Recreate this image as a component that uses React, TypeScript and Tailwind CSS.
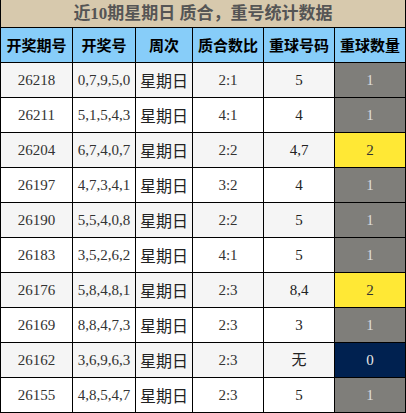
import React from "react";

type Row = { id: string; nums: string; week: string; ratio: string; rep: string; cnt: number };

const rows: Row[] = [
  { id: "26218", nums: "0,7,9,5,0", week: "星期日", ratio: "2:1", rep: "5", cnt: 1 },
  { id: "26211", nums: "5,1,5,4,3", week: "星期日", ratio: "4:1", rep: "4", cnt: 1 },
  { id: "26204", nums: "6,7,4,0,7", week: "星期日", ratio: "2:2", rep: "4,7", cnt: 2 },
  { id: "26197", nums: "4,7,3,4,1", week: "星期日", ratio: "3:2", rep: "4", cnt: 1 },
  { id: "26190", nums: "5,5,4,0,8", week: "星期日", ratio: "2:2", rep: "5", cnt: 1 },
  { id: "26183", nums: "3,5,2,6,2", week: "星期日", ratio: "4:1", rep: "5", cnt: 1 },
  { id: "26176", nums: "5,8,4,8,1", week: "星期日", ratio: "2:3", rep: "8,4", cnt: 2 },
  { id: "26169", nums: "8,8,4,7,3", week: "星期日", ratio: "2:3", rep: "3", cnt: 1 },
  { id: "26162", nums: "3,6,9,6,3", week: "星期日", ratio: "2:3", rep: "无", cnt: 0 },
  { id: "26155", nums: "4,8,5,4,7", week: "星期日", ratio: "2:3", rep: "5", cnt: 1 },
];

const headers = ["开奖期号", "开奖号", "周次", "质合数比", "重球号码", "重球数量"];

const font = { fontFamily: '"Liberation Serif", "Noto Sans CJK SC", serif' };

function cntCls(c: number) {
  if (c === 2) return "bg-[#ffe835] text-[#333333]";
  if (c === 0) return "bg-[#002150] text-[#e8e8e8]";
  return "bg-[#7f7e7a] text-[#dcdcdc]";
}

export default function App() {
  return (
    <div className="w-[406px] h-[413px] bg-white overflow-hidden" style={font}>
      <div className="h-[27px] bg-[#d7c9ad] border-x border-black flex items-center justify-center text-[17px] font-bold text-[#555555] leading-none">
        近10期星期日 质合，重号统计数据
      </div>
      <div className="grid grid-cols-[72px_63px_57px_71px_71px_72px] border-b border-black">
        {headers.map((h, i) => (
          <div
            key={h}
            className={
              "h-[35px] border-t border-l border-black bg-[#87cdf9] flex items-center justify-center text-[15px] font-bold text-black " +
              (i === 5 ? "border-r" : "")
            }
            style={{ fontFamily: '"Noto Sans CJK SC", sans-serif' }}
          >
            {h}
          </div>
        ))}
        {rows.map((r, ri) => {
          const bg = ri % 2 === 0 ? "bg-[#f5f5f5]" : "bg-white";
          const base = "h-[35px] border-t border-l border-black flex items-center justify-center text-[15px] ";
          return (
            <React.Fragment key={r.id}>
              <div className={base + bg + " text-[#333333]"}>{r.id}</div>
              <div className={base + bg + " text-[#333333]"}>{r.nums}</div>
              <div className={base + bg + " text-[#222222] text-[16px]"} style={{ fontFamily: '"Noto Sans CJK SC", sans-serif' }}>{r.week}</div>
              <div className={base + bg + " text-[#333333]"}>{r.ratio}</div>
              <div className={base + bg + " text-[#222222]"}>{r.rep}</div>
              <div className={base + "border-r " + cntCls(r.cnt)}>{r.cnt}</div>
            </React.Fragment>
          );
        })}
      </div>
    </div>
  );
}
